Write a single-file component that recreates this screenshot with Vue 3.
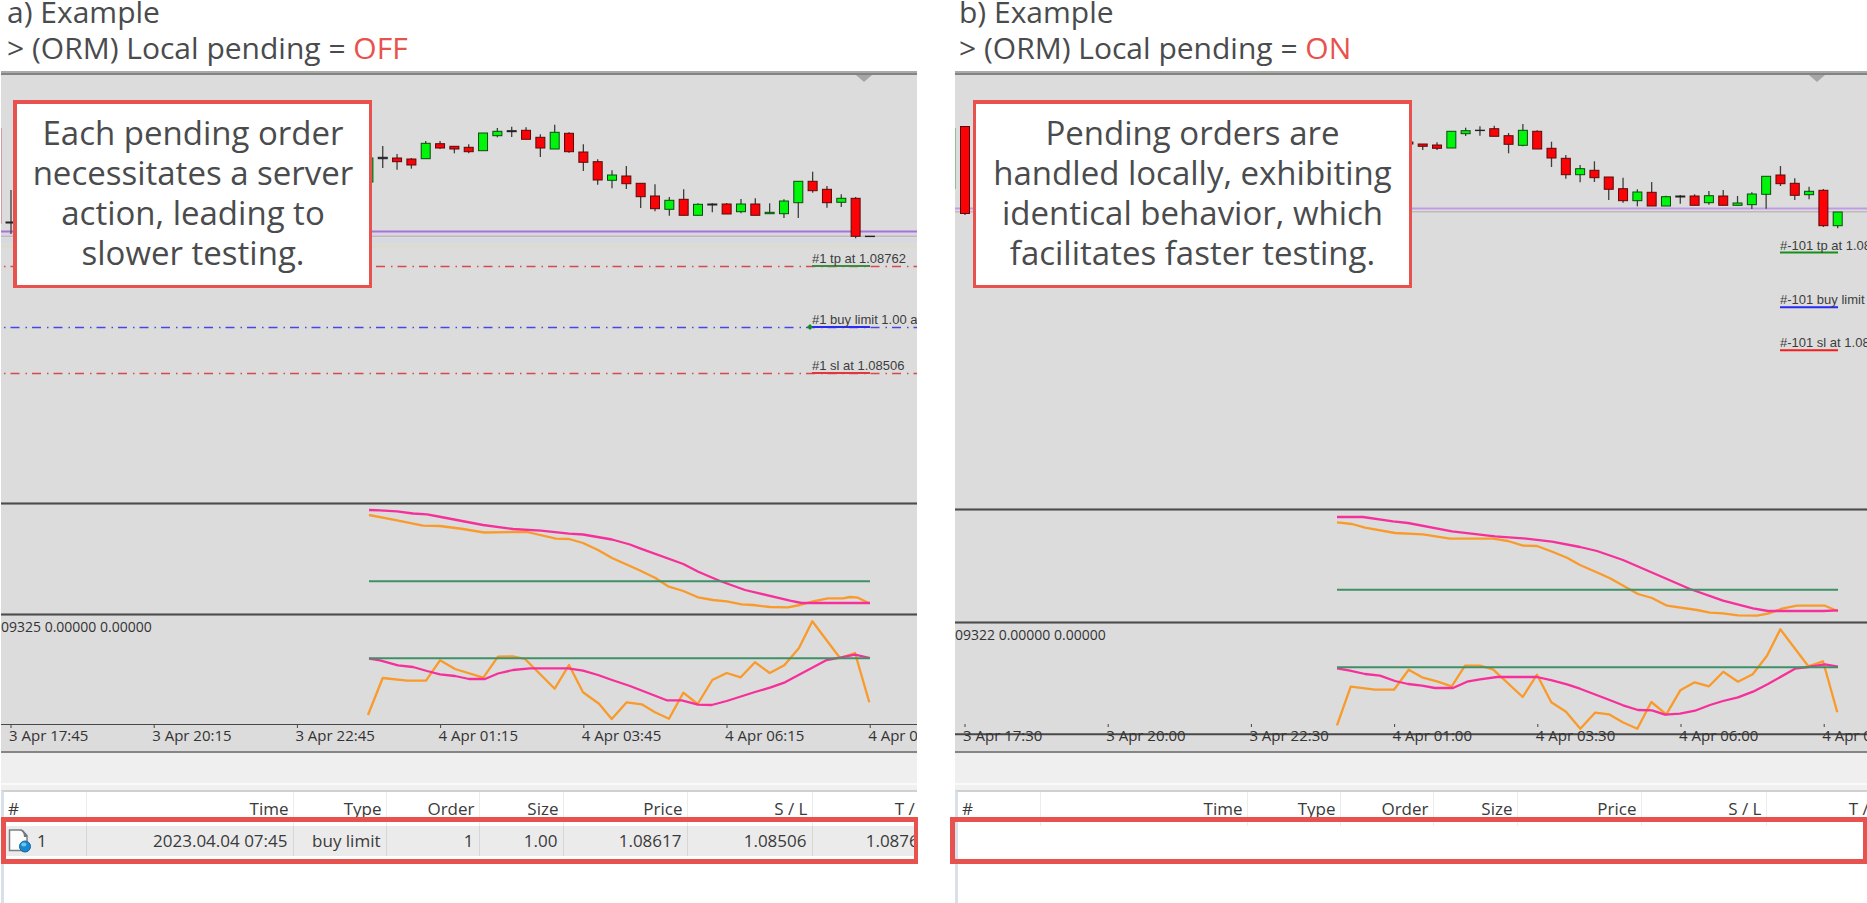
<script setup>
const A_CANDLES = [
  ['g', 158, 158, 182, 182],
  ['k', 146, 157.3, 158.7, 168],
  ['r', 154, 158, 161.7, 169.7],
  ['r', 158, 159, 165, 168.7],
  ['g', 141, 143.3, 158.7, 158.7],
  ['r', 141, 143.7, 148, 149],
  ['r', 146.3, 146.3, 149, 153.3],
  ['r', 144.3, 147.3, 151.7, 153.3],
  ['g', 133, 133, 150.7, 150.7],
  ['g', 128, 131.3, 135.7, 137.3],
  ['k', 126.7, 130.7, 131.7, 137],
  ['r', 127.3, 130.3, 139.3, 139.3],
  ['r', 134.3, 137.3, 148, 157],
  ['g', 124.7, 132.3, 149, 149],
  ['r', 132.3, 133.3, 151.7, 152.7],
  ['r', 144.3, 152, 162.3, 171],
  ['r', 159.3, 161.7, 180, 184.7],
  ['g', 170.3, 175, 180.3, 188.3],
  ['r', 166, 176, 183.7, 189],
  ['r', 183.3, 183.3, 196.7, 208],
  ['r', 184.3, 196, 208.7, 211.3],
  ['g', 197, 200.3, 209.3, 215.7],
  ['r', 189.3, 199.3, 215.3, 215.3],
  ['g', 203.3, 204.3, 215.3, 215.3],
  ['k', 203.3, 204, 205, 212.3],
  ['r', 203, 204, 214, 214],
  ['g', 199, 204, 211.7, 213.3],
  ['r', 198.3, 204, 215.3, 215.3],
  ['g', 203.3, 212.3, 213.7, 214],
  ['g', 199.3, 201, 213.7, 218],
  ['g', 181.3, 181.3, 202.7, 218],
  ['r', 171.7, 181.3, 190.7, 192.7],
  ['r', 186, 189.3, 202.7, 207.7],
  ['g', 194.3, 198.3, 202.3, 207],
  ['r', 197, 198.3, 236.3, 238.3],
  ['k', 236, 236.2, 236.6, 237]
]

const B_CANDLES = [
  ['r', 142, 142, 144, 144],
  ['r', 144, 144, 146.3, 150],
  ['r', 142.3, 145, 148.3, 150],
  ['g', 131.3, 131.3, 148, 148],
  ['g', 127.7, 130.7, 133.7, 136],
  ['k', 126.3, 130.2, 130.6, 135.7],
  ['r', 125.7, 128.7, 136.3, 136.3],
  ['r', 133, 135.7, 144.3, 153.3],
  ['g', 124, 130.3, 145.3, 146.3],
  ['r', 130.3, 131.3, 149, 149],
  ['r', 141.7, 148.3, 158, 167],
  ['r', 155, 158.3, 174.7, 178.7],
  ['g', 165, 168.7, 174.7, 182.3],
  ['r', 161.3, 170.3, 177.7, 182],
  ['r', 177, 177, 189.3, 200],
  ['r', 177.7, 188.7, 200.7, 202.7],
  ['g', 189.3, 192, 200.7, 206.3],
  ['r', 182, 192.3, 206, 206],
  ['g', 195.7, 196.7, 206, 206],
  ['k', 195, 196, 197, 203.7],
  ['r', 194.3, 196, 205.3, 205.3],
  ['g', 191, 195.7, 202.7, 204.7],
  ['r', 190, 196, 205.3, 205.3],
  ['g', 196, 203, 205.3, 205.3],
  ['g', 192.3, 194, 204.7, 209],
  ['g', 176.3, 176.3, 194.3, 208.7],
  ['r', 166, 175, 183.7, 186],
  ['r', 178.3, 183.3, 195.3, 200],
  ['g', 186.7, 191.3, 194.7, 199.3],
  ['r', 189, 190.3, 225.7, 227],
  ['g', 212, 212, 225.7, 228.3]
]

const BODY = 9
function candles(first, step, rows) {
  return rows.map(([tone, high, top, bottom, low], i) => ({
    tone,
    cx: first + step * i,
    x: first + step * i - BODY / 2,
    high,
    low,
    top,
    height: bottom - top
  }))
}

const panels = [
  {
    id: 'a',
    title: 'a) Example',
    state: 'OFF',
    note: 'Each pending order necessitates a server action, leading to slower testing.',
    originX: -1,
    marker: 864,
    candles: [
      ...candles(368.4, 14.33, A_CANDLES),
      { tone: 'k', cx: 11, x: 6, high: 190, low: 234, top: 222, height: 1 }
    ],
    sliver: { x: 1, y: 128, h: 96, color: '#d99aa2' },
    bid: 231.5,
    bidColor: '#a277cf',
    haze: true,
    ask: 236.3,
    levels: [
      { y: 266.5, color: '#d64a4f' },
      { y: 327.5, color: '#4a46e6' },
      { y: 373.5, color: '#d64a4f' }
    ],
    pendingX: 812,
    pending: [
      { y: 266, text: '#1 tp at 1.08762', color: '#3d8a41' },
      { y: 327, text: '#1 buy limit 1.00 at', color: '#2b2bf0' },
      { y: 373, text: '#1 sl at 1.08506', color: '#e0363c' }
    ],
    anchor: { x: 810, y: 327 },
    split1: 502,
    split2: 613,
    zero1: 581.3,
    zero2: 658.3,
    from: 369,
    to: 870,
    values: '09325 0.00000 0.00000',
    valuesX: 1,
    valuesY: 632,
    axisY: 724.5,
    axisWidth: 1,
    tickY: 725,
    tickX: 11,
    ticks: ['3 Apr 17:45', '3 Apr 20:15', '3 Apr 22:45', '4 Apr 01:15', '4 Apr 03:45', '4 Apr 06:15', '4 Apr 08:45'],
    slow1: '369,510 380,510.3 397,511.3 413,513.5 427,514.3 441,517 483,525 513,529 541,530.7 569,533.7 583,534.5 612,539.5 630,544.5 640,548.3 683.3,564 698.3,571.7 720,581 745,590 790,600.7 801.7,603 870,603',
    fast1: '369,515 397,520.3 423,525.7 440,526 463,529 484,532.5 515,532 527,532 556,538.7 569,539 583,543 598,550 612,558 640,570.5 655,577.7 668,586.3 683.3,591 698,597.3 713,600 726.7,601.3 741.7,604.3 753,605 770,607 788,607.3 800,605 813,601.3 828,598.3 843,598.3 850,597 858,597.7 869,603.3',
    slow2: '369,658.7 380,660.3 398,665.3 413,667 427,671 440,674.3 455,676 469,679 485,679 498,673.5 513,670 530,668.3 568,668.3 583,670.7 598,675 612,680 630,686 666.7,700.3 681.7,700.3 698,704.7 711.7,705 726.7,701 755,692 770,687.7 785,682.3 826.7,660 840,657.7 855,654.7 870,658',
    fast2: '368,715 382.7,678 407,680.7 426,680.7 440,660.3 455,669 483.3,677.7 498,656.7 513,656.3 525,659 554.7,688.7 569,665 583,692.3 599,703.7 611.7,719 626.7,702.3 641.7,704.3 655,712.3 669,718.7 683.3,692.7 697.7,704 712.3,680 726.7,673 740.7,677.3 755,662.3 769.7,673 784.3,665.3 799,648 812.3,621.3 840,658 855,653 869.3,702.3',
    orders: [['1', '2023.04.04 07:45', 'buy limit', '1', '1.00', '1.08617', '1.08506', '1.08762']]
  },
  {
    id: 'b',
    title: 'b) Example',
    state: 'ON',
    note: 'Pending orders are handled locally, exhibiting identical behavior, which facilitates faster testing.',
    originX: -955,
    marker: 1817,
    candles: [
      ...candles(1408.4, 14.31, B_CANDLES),
      { tone: 'r', cx: 965, x: 960.5, high: 126, low: 215, top: 126.5, height: 87 }
    ],
    sliver: { x: 955, y: 128, h: 61, color: '#8fbf93' },
    bid: 208.5,
    bidColor: '#c19ce6',
    haze: false,
    ask: 211.8,
    levels: [],
    pendingX: 1780,
    pending: [
      { y: 252.5, text: '#-101 tp at 1.08762', color: '#179017' },
      { y: 307.3, text: '#-101 buy limit 1.00', color: '#2929f5' },
      { y: 350.3, text: '#-101 sl at 1.08506', color: '#f51c1c' }
    ],
    anchor: null,
    split1: 508,
    split2: 621,
    zero1: 589.7,
    zero2: 667.3,
    from: 1337,
    to: 1838,
    values: '09322 0.00000 0.00000',
    valuesX: 955,
    valuesY: 640,
    axisY: 734.3,
    axisWidth: 2,
    tickY: 724,
    tickX: 965,
    ticks: ['3 Apr 17:30', '3 Apr 20:00', '3 Apr 22:30', '4 Apr 01:00', '4 Apr 03:30', '4 Apr 06:00', '4 Apr 08:30'],
    slow1: '1337,517 1363,517 1393,521.3 1408,523 1452,531.3 1495,536.3 1523,538.3 1552,541.7 1580,547 1597,551 1623,560 1690,589 1723,600.7 1753,608.3 1768,611 1823,611 1838,610.3',
    fast1: '1337,522.3 1352,524 1365,527.7 1395,533 1423,534.3 1450,538.7 1493,538.7 1508,541 1523,545.7 1537,546 1553,552 1567,557.7 1580,565 1600,573.7 1610,578.3 1638,594 1652,598 1667,605.7 1697,610 1710,612.7 1723,613.3 1738,615.3 1757,615.7 1768,613.7 1782,608.7 1797,605.7 1825,605.7 1838,611.3',
    slow2: '1337,668.3 1350,670.7 1365,674 1380,675.7 1395,681 1408,684 1422,685.7 1435,688 1453,688 1467,681.7 1480,679.3 1497,677 1537,677 1552,680.3 1567,684.3 1580,688.7 1607,699 1623,705.3 1638,710 1652,710.3 1665,714.7 1680,713.7 1695,710.7 1710,705 1723,701 1738,697.3 1753,691.7 1768,684 1795,668.7 1808,667 1825,664.3 1838,666.7',
    fast2: '1337,725.3 1350.7,686.7 1375,689.7 1394,689.7 1408.7,669.7 1422,677.3 1437,681.3 1451.7,686.3 1465,665.7 1480,665.7 1493,669.3 1522.7,697 1537,674.7 1551.3,702.3 1566,711.7 1580.3,728.7 1595,712.7 1609,714.3 1622.7,722.3 1637.3,728.7 1651.3,702 1666.3,714.3 1680.3,690.3 1694.7,682.3 1709,686.3 1723.3,671.7 1738,681.7 1752.7,674.3 1767,655.7 1780.3,629.3 1808.3,666.3 1823,661.3 1837.3,712.3',
    orders: []
  }
]

const columns = [
  { label: '#', width: 82 },
  { label: 'Time', width: 207 },
  { label: 'Type', width: 93 },
  { label: 'Order', width: 93 },
  { label: 'Size', width: 84 },
  { label: 'Price', width: 124 },
  { label: 'S / L', width: 125 },
  { label: 'T / P', width: 122 }
]
</script>

<template>
  <main class="compare">
    <section v-for="p in panels" :key="p.id" class="panel" :class="'panel-' + p.id">
      <h2 class="heading">
        {{ p.title }}<br />&gt; (ORM) Local pending = <span class="state">{{ p.state }}</span>
      </h2>

      <div class="chart">
        <svg class="plot" role="img" :aria-label="p.title + ' price chart'">
          <!-- full-width rules -->
          <g transform="translate(0 -71)">
            <rect x="0" y="71" width="100%" height="2" fill="#a9aba9" />
            <rect x="0" y="73" width="100%" height="2" fill="#828482" />
            <template v-if="p.haze">
              <rect x="0" y="232" width="100%" height="3" fill="#e0d0ea" />
              <rect x="0" y="238" width="100%" height="5" fill="#d6d9df" />
              <rect x="0" y="244" width="100%" height="4" fill="#dcdbd2" />
            </template>
            <line x1="0" x2="100%" :y1="p.bid" :y2="p.bid" :stroke="p.bidColor" stroke-width="2" />
            <line x1="0" x2="100%" :y1="p.ask" :y2="p.ask" stroke="#bdb9b9" stroke-width="1.4" />
            <line v-for="l in p.levels" :key="l.y" x1="-12" x2="100%" :y1="l.y" :y2="l.y" :stroke="l.color" class="level" />
            <template v-for="y in [p.split1, p.split2]" :key="y">
              <rect x="0" :y="y" width="100%" height="3" fill="#8c8c8c" />
              <rect x="0" :y="y + 1" width="100%" height="1" fill="#4c4c4c" />
            </template>
            <line x1="0" x2="100%" :y1="p.axisY" :y2="p.axisY" stroke="#484848" :stroke-width="p.axisWidth" />
            <rect x="0" y="751" width="100%" height="2" fill="#858585" />
          </g>

          <g :transform="`translate(${p.originX} -71)`">
            <rect :x="p.sliver.x" :y="p.sliver.y" width="1" :height="p.sliver.h" :fill="p.sliver.color" />
            <path :d="`M${p.marker - 8} 75h16l-8 7z`" fill="#a6a6a6" />
            <g v-for="(c, i) in p.candles" :key="i" :class="['candle', c.tone]">
              <line :x1="c.cx" :x2="c.cx" :y1="c.high" :y2="c.low" />
              <rect :x="c.x" :y="c.top" width="9" :height="c.height" />
            </g>

            <g v-for="o in p.pending" :key="o.text">
              <line :x1="p.pendingX" :x2="p.pendingX + 58" :y1="o.y" :y2="o.y" :stroke="o.color" stroke-width="2" />
              <text class="order-label" :x="p.pendingX" :y="o.y - 3">{{ o.text }}</text>
            </g>
            <path v-if="p.anchor" :d="`M${p.anchor.x} ${p.anchor.y - 3}l3 3-3 3-3-3z`" fill="#178a2a" />

            <polyline class="curve fast" :points="p.fast1" />
            <polyline class="curve slow" :points="p.slow1" />
            <polyline class="curve fast" :points="p.fast2" />
            <polyline class="curve slow" :points="p.slow2" />
            <line class="curve zero" :x1="p.from" :x2="p.to" :y1="p.zero1" :y2="p.zero1" />
            <line class="curve zero" :x1="p.from" :x2="p.to" :y1="p.zero2" :y2="p.zero2" />

            <text class="axis-label" :x="p.valuesX" :y="p.valuesY">{{ p.values }}</text>
            <g v-for="(t, i) in p.ticks" :key="t">
              <rect :x="p.tickX + i * 143.2 - 0.5" :y="p.tickY" width="1" height="3" fill="#444" />
              <text class="axis-label tick-label" :x="p.tickX - 2 + i * 143.2" y="741">{{ t }}</text>
            </g>
          </g>
        </svg>
        <p class="note">{{ p.note }}</p>
      </div>

      <div class="toolbar"></div>

      <div class="trade">
        <div class="trade-view">
          <table class="orders">
            <colgroup>
              <col v-for="c in columns" :key="c.label" :style="{ width: c.width + 'px' }" />
            </colgroup>
            <thead>
              <tr>
                <th v-for="c in columns" :key="c.label" scope="col">{{ c.label }}</th>
              </tr>
            </thead>
            <tbody>
              <tr v-for="row in p.orders" :key="row[0]">
                <td v-for="(cell, i) in row" :key="i">
                  <span v-if="i === 0" class="ticket">
                    <svg width="23" height="24" viewBox="0 0 23 24" aria-hidden="true">
                      <path d="M1.500 1h12l5.500 5.500v15h-17.500z" fill="#fdfdfd" stroke="#7b8084" stroke-width="1.500" />
                      <path d="M11 1q5 1 5 7h3v-2l-4-5z" fill="#74797d" />
                      <circle cx="17" cy="17.500" r="5.500" fill="#1888cf" stroke="#14679f" />
                      <ellipse cx="15.800" cy="15.500" rx="2.600" ry="1.900" fill="#6fc4f2" />
                    </svg>
                    {{ cell }}
                  </span>
                  <template v-else>{{ cell }}</template>
                </td>
              </tr>
            </tbody>
          </table>
        </div>
        <div class="highlight"></div>
      </div>
    </section>
  </main>
</template>

<style>
body {
  margin: 0;
  background: #fff;
}
</style>

<style scoped>
.compare {
  display: grid;
  grid-template-columns: 916fr 912fr;
  column-gap: 38px;
  min-height: 100vh;
  padding-left: 1px;
  box-sizing: border-box;
  overflow: hidden;
  font-family: "Open Sans", "Noto Sans", sans-serif;
  color: #4a4b4d;
}

.panel {
  display: flex;
  flex-direction: column;
  min-width: 0;
}

.heading {
  margin: -6px 0 0;
  padding: 0 0 5px 6px;
  font-size: 30px;
  line-height: 36px;
  font-weight: 400;
  white-space: nowrap;
}

.panel-b .heading {
  padding-left: 4px;
}

.state {
  color: #e8524e;
}

.chart {
  position: relative;
  background: #dcdcdc;
}

.plot {
  display: block;
  width: 100%;
  height: 682px;
  overflow: hidden;
}

.note {
  position: absolute;
  top: 29px;
  left: 12px;
  box-sizing: border-box;
  width: 359px;
  margin: 0;
  padding: 9px 12px 12px;
  border: 4px solid #e8524e;
  border-width: 4px 3px 3px 4px;
  background: #fff;
  font-size: 33px;
  line-height: 40px;
  text-align: center;
}

.panel-b .note {
  left: 18px;
  width: 439px;
  border-left-width: 3px;
}

.level {
  stroke-width: 1.4;
  stroke-dasharray: 9 6 1.5 5;
}

.candle line {
  stroke: #3c403c;
  stroke-width: 1.3;
}

.candle rect {
  stroke: #222;
  stroke-width: 1;
}

.candle.g rect {
  fill: #00f50a;
  stroke: #0a4a10;
}

.candle.r rect {
  fill: #fb0207;
  stroke: #5a0a0a;
}

.candle.k rect {
  fill: #333;
}

.order-label {
  font-family: "Liberation Sans", Arial, sans-serif;
  font-size: 13px;
  fill: #3c3c3c;
}

.axis-label {
  font-size: 14px;
  fill: #333;
}

.tick-label {
  font-size: 15px;
}

.curve {
  fill: none;
  stroke-width: 2.3;
  stroke-linejoin: round;
}

.fast {
  stroke: #f99a2a;
}

.slow {
  stroke: #f6309a;
}

.curve.zero {
  stroke: #3f9067;
  stroke-width: 2;
}

.toolbar {
  height: 37px;
  background: linear-gradient(#efefef 30px, #f9f9f9 30px, #f9f9f9 32px, #f0f0f0 32px);
}

.trade {
  position: relative;
  display: flex;
  flex: 1;
  min-height: 100px;
}

.trade-view {
  flex: 1;
  min-width: 0;
  overflow: hidden;
  border-top: 2px solid #d0d0d0;
  border-left: 3px solid #d9e0e9;
  background: #fff;
}

.orders {
  table-layout: fixed;
  width: 930px;
  border-collapse: collapse;
  font-size: 17px;
  line-height: 24px;
  color: #3a3a3a;
}

.orders th {
  padding: 5px 4px;
  border-right: 1px solid #ececec;
  font-weight: 400;
  text-align: right;
  white-space: nowrap;
}

.orders td {
  padding: 3px 5px 3px 4px;
  border-right: 1px solid #d6d6d6;
  background: #ebebeb;
  text-align: right;
  white-space: nowrap;
}

.orders th:first-child,
.orders td:first-child {
  text-align: left;
}

.ticket {
  display: flex;
  align-items: center;
  gap: 6px;
}

.highlight {
  position: absolute;
  top: 27px;
  left: 0;
  right: -1px;
  box-sizing: border-box;
  height: 47px;
  border: 5px solid #e8524e;
  border-right-width: 4px;
}

.panel-b .highlight {
  left: -5px;
  right: 0;
}
</style>
